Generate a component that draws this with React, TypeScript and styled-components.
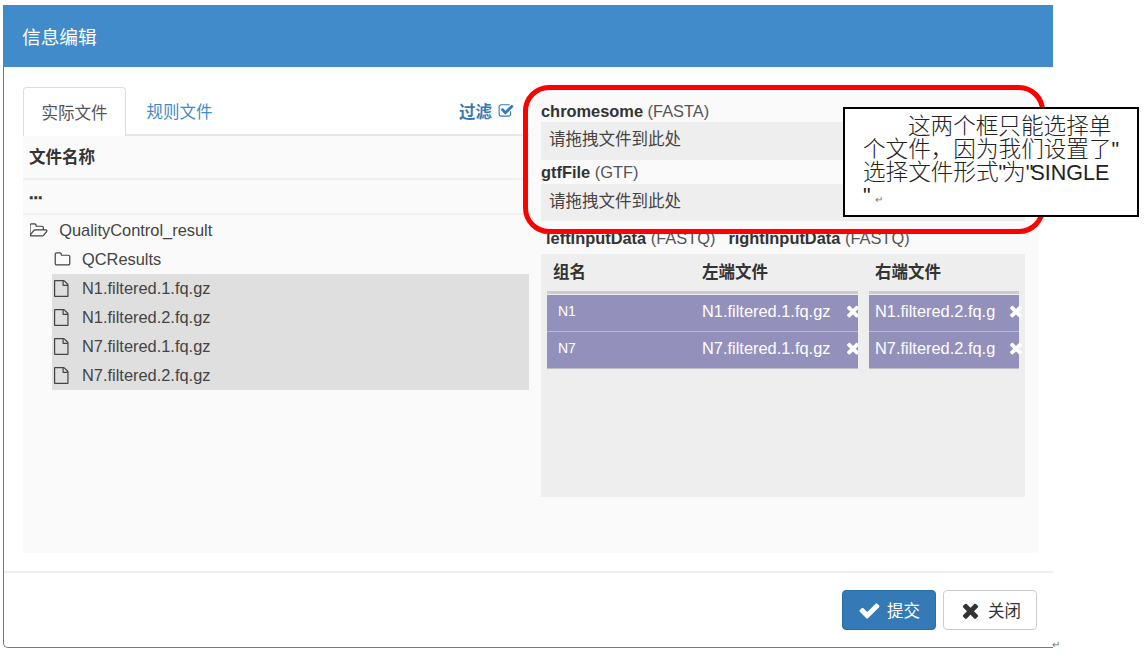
import React from 'react'
import styled, { createGlobalStyle } from 'styled-components'

const FONT = `"Liberation Sans", "Noto Sans CJK SC", sans-serif`

const GlobalStyle = createGlobalStyle`
  html, body {
    margin: 0;
    padding: 0;
    background: #fff;
    font-family: ${FONT};
    color: #333;
  }
`

// Font Awesome 4 glyphs, the package only ships the redrawn 5 set
const paths = {
  file: 'M1468 380q28 28 48 76t20 88v1152q0 40-28 68t-68 28h-1344q-40 0-68-28t-28-68v-1600q0-40 28-68t68-28h896q40 0 88 20t76 48zm-444-244v376h376q-10-29-22-41l-313-313q-12-12-41-22zm384 1528v-1024h-416q-40 0-68-28t-28-68v-416h-768v1536h1280z',
  folder: 'M1600 1312v-704q0-40-28-68t-68-28h-704q-40 0-68-28t-28-68v-64q0-40-28-68t-68-28h-320q-40 0-68 28t-28 68v960q0 40 28 68t68 28h1216q40 0 68-28t28-68zm128-704v704q0 92-66 158t-158 66h-1216q-92 0-158-66t-66-158v-960q0-92 66-158t158-66h320q92 0 158 66t66 158v32h672q92 0 158 66t66 158z',
  folderOpen: 'M1717 931q0-35-53-35h-1088q-40 0-85.5 21.5t-71.5 52.5l-294 363q-18 24-18 40 0 35 53 35h1088q40 0 86-22t71-53l294-363q18-22 18-39zm-1141-163h768v-160q0-40-28-68t-68-28h-576q-40 0-68-28t-28-68v-64q0-40-28-68t-68-28h-320q-40 0-68 28t-28 68v853l256-315q44-53 116-87.5t140-34.5zm1269 163q0 62-46 120l-295 363q-43 53-116 87.5t-140 34.5h-1088q-92 0-158-66t-66-158v-960q0-92 66-158t158-66h320q92 0 158 66t66 158v32h544q92 0 158 66t66 158v160h192q54 0 99 24.5t67 70.5q15 32 15 68z',
  times: 'M1490 1322q0 40-28 68l-136 136q-28 28-68 28t-68-28l-294-294-294 294q-28 28-68 28t-68-28l-136-136q-28-28-28-68t28-68l294-294-294-294q-28-28-28-68t28-68l136-136q28-28 68-28t68 28l294 294 294-294q28-28 68-28t68 28l136 136q28 28 28 68t-28 68l-294 294 294 294q28 28 28 68z',
  check: 'M1671 566q0 40-28 68l-724 724-136 136q-28 28-68 28t-68-28l-136-136-362-362q-28-28-28-68t28-68l136-136q28-28 68-28t68 28l294 295 656-657q28-28 68-28t68 28l136 136q28 28 28 68z',
  checkSquare: 'M1472 930v318q0 119-84.5 203.5t-203.5 84.5h-832q-119 0-203.5-84.5t-84.5-203.5v-832q0-119 84.5-203.5t203.5-84.5h832q63 0 117 25 15 7 18 23 3 17-9 29l-49 49q-10 10-23 10-3 0-9-2-23-6-45-6h-832q-66 0-113 47t-47 113v832q0 66 47 113t113 47h832q66 0 113-47t47-113v-254q0-13 9-22l64-64q10-10 23-10 6 0 12 3 20 8 20 29zm231-489l-814 814q-24 24-57 24t-57-24l-430-430q-24-24-24-57t24-57l110-110q24-24 57-24t57 24l263 263 647-647q24-24 57-24t57 24l110 110q24 24 24 57t-24 57z'
}

const IconSvg = styled.svg`
  flex: none;
  fill: currentColor;
  display: block;
`

interface IconProps {
  name: keyof typeof paths,
  size: number
}

const Icon: React.FC<IconProps> = ({ name, size }) => {
  const vbWidth = name === 'folderOpen' ? 1920 : 1792
  return (
    <IconSvg width={size * vbWidth / 1792} height={size} viewBox={`0 0 ${vbWidth} 1792`}>
      <path d={paths[name]} />
    </IconSvg>
  )
}

const Page = styled.div`
  position: relative;
  width: 1148px;
  height: 658px;
  overflow: hidden;
  padding: 5px 0 0 3px;
  box-sizing: border-box;
`

const Modal = styled.div`
  width: 1050px;
  height: 643px;
  box-sizing: border-box;
  display: flex;
  flex-direction: column;
  border-left: 1px solid #777;
  border-bottom: 1px solid #777;
  border-bottom-left-radius: 5px;
`

const Header = styled.div`
  height: 62px;
  flex: none;
  background: #428bca;
  color: #fff;
  font-size: 18.7px;
  display: flex;
  align-items: center;
  padding-left: 19px;
  margin-left: -1px;
  padding-bottom: 1px;
  box-sizing: border-box;
`

const Body = styled.div`
  height: 504px;
  flex: none;
  padding: 20px 17px 18px 19px;
  box-sizing: border-box;
  display: flex;
`

const LeftPanel = styled.div`
  width: 506px;
  flex: none;
  display: flex;
  flex-direction: column;
`

const Tabs = styled.div`
  height: 49px;
  flex: none;
  box-sizing: border-box;
  display: flex;
  align-items: stretch;
  border-bottom: 2px solid #e6e6e6;
`

const Tab = styled.div<{ $active?: boolean }>`
  width: 103px;
  box-sizing: border-box;
  height: ${(p) => (p.$active ? '49px' : '47px')};
  margin-left: ${(p) => (p.$active ? '0' : '2px')};
  display: flex;
  align-items: center;
  justify-content: center;
  font-size: 16.5px;
  color: ${(p) => (p.$active ? '#555' : '#428bca')};
  background: #fff;
  border: ${(p) => (p.$active ? '1px solid #ddd' : 'none')};
  border-bottom: none;
  border-radius: 4px 4px 0 0;
`

const FilterLink = styled.div`
  margin-left: auto;
  margin-right: 15px;
  display: flex;
  align-items: center;
  gap: 6px;
  font-size: 16.5px;
  font-weight: 700;
  color: #337ab7;
`

const TreePanel = styled.div`
  flex: 1;
  background: #fafafa;
`

const TableHead = styled.div`
  height: 44px;
  box-sizing: border-box;
  padding: 0 0 2px 6px;
  display: flex;
  align-items: center;
  font-size: 16.5px;
  font-weight: 700;
  border-bottom: 2px solid #f0f0f0;
`

const ParentRow = styled.div`
  height: 35px;
  box-sizing: border-box;
  padding: 0 0 6px 6px;
  display: flex;
  align-items: center;
  font-size: 16px;
  font-weight: 700;
  -webkit-text-stroke: 0.5px #333;
  border-bottom: 2px solid #f0f0f0;
`

const Tree = styled.div`
  padding-top: 1px;
`

const TreeRow = styled.div<{ $depth: number; $selected?: boolean }>`
  height: 29px;
  margin-left: ${(p) => (p.$depth ? '29px' : '0')};
  padding-left: ${(p) => (p.$depth ? '2px' : '7px')};
  display: flex;
  align-items: center;
  gap: 11px;
  font-size: 16.4px;
  color: #444;
  background: ${(p) => (p.$selected ? '#dfdfdf' : 'transparent')};
`

const RightPanel = styled.div`
  flex: 1;
  background: #fafafa;
  padding: 14px 13px 0 12px;
  box-sizing: border-box;
  display: flex;
  flex-direction: column;
`

const FieldLabel = styled.div`
  height: 20px;
  line-height: 20px;
  font-size: 16.4px;
  color: #555;
  white-space: nowrap;
  strong {
    color: #333;
  }
`

const DropZone = styled.div<{ $height: number; $top: number }>`
  height: ${(p) => p.$height}px;
  margin: ${(p) => p.$top}px 0 2px;
  padding: 0 0 6px 8px;
  box-sizing: border-box;
  background: #eee;
  display: flex;
  align-items: center;
  font-size: 16.5px;
  color: #444;
`

const PairLabels = styled.div`
  display: flex;
  gap: 13px;
  margin: 5px 0 6px 5px;
`

const PairTable = styled.div`
  height: 243px;
  background: #eee;
  padding: 0 6px;
`

const PairColumns = styled.div`
  display: flex;
  gap: 11px;
`

const PairColumn = styled.div<{ $width: number }>`
  width: ${(p) => p.$width}px;
  flex: none;
`

const PairHeader = styled.div`
  height: 40px;
  box-sizing: border-box;
  padding-bottom: 4px;
  display: flex;
  align-items: center;
  font-size: 16.5px;
  font-weight: 700;
  border-bottom: 3px solid #ccc;
  margin-bottom: 1px;
`

const HeaderCell = styled.div<{ $width: number; $indent: number }>`
  width: ${(p) => p.$width}px;
  padding-left: ${(p) => p.$indent}px;
  box-sizing: border-box;
`

const PairRow = styled.div<{ $clip?: boolean }>`
  height: 37px;
  box-sizing: border-box;
  padding-bottom: 4px;
  background: #9490bc;
  border-bottom: 1px solid #bcbcc4;
  color: #fff;
  display: flex;
  align-items: center;
  font-size: 16.4px;
  overflow: ${(p) => (p.$clip ? 'hidden' : 'visible')};
`

const GroupCell = styled.div`
  width: 155px;
  flex: none;
  padding-left: 11px;
  box-sizing: border-box;
  font-size: 14px;
`

const FileCell = styled.div<{ $width: number; $indent: number }>`
  width: ${(p) => p.$width}px;
  margin-left: ${(p) => p.$indent}px;
  flex: none;
  overflow: hidden;
  white-space: nowrap;
`

const RemoveSlot = styled.div`
  flex: none;
  margin-left: -3px;
  color: #fff;
`

const Footer = styled.div`
  flex: 1;
  box-sizing: border-box;
  border-top: 2px solid #eee;
  padding: 17px 16px 0 0;
  display: flex;
  justify-content: flex-end;
  align-items: flex-start;
  gap: 7px;
`

const Button = styled.div<{ $primary?: boolean }>`
  width: 94px;
  height: 40px;
  box-sizing: border-box;
  border-radius: 4px;
  border: 1px solid ${(p) => (p.$primary ? '#2e6da4' : '#ccc')};
  background: ${(p) => (p.$primary ? '#337ab7' : '#fff')};
  color: ${(p) => (p.$primary ? '#fff' : '#333')};
  display: flex;
  align-items: center;
  justify-content: center;
  gap: 6px;
  font-size: 16.5px;
`

const Highlight = styled.div`
  position: absolute;
  left: 523px;
  top: 85px;
  width: 522px;
  height: 149px;
  box-sizing: border-box;
  border: 5px solid #f00;
  border-radius: 26px;
`

const Callout = styled.div`
  position: absolute;
  left: 843px;
  top: 107px;
  width: 296px;
  height: 110px;
  box-sizing: border-box;
  border: 2px solid #000;
  background: #fff;
  color: #222;
  padding: 6px 0 0 18px;
  font-size: 22.6px;
  line-height: 23px;
  font-weight: 300;
`

const CalloutLine = styled.div<{ $indent?: number }>`
  height: 23px;
  white-space: nowrap;
  padding-left: ${(p) => p.$indent || 0}px;
`

const CalloutLatin = styled.span`
  font-size: 21.5px;
`

const CalloutQuote = styled(CalloutLatin)`
  letter-spacing: -3px;
`

const ReturnMark = styled.span`
  font-size: 10px;
  line-height: 10px;
  color: #777;
  padding-left: 4px;
`

const PageReturnMark = styled(ReturnMark)`
  position: absolute;
  left: 1048px;
  top: 640px;
`

const files = ['N1.filtered.1.fq.gz', 'N1.filtered.2.fq.gz', 'N7.filtered.1.fq.gz', 'N7.filtered.2.fq.gz']
const pairs = [
  { group: 'N1', left: 'N1.filtered.1.fq.gz', right: 'N1.filtered.2.fq.g' },
  { group: 'N7', left: 'N7.filtered.1.fq.gz', right: 'N7.filtered.2.fq.g' }
]

const App: React.FC = () => (
  <Page>
    <GlobalStyle />
    <Modal>
      <Header>信息编辑</Header>
      <Body>
        <LeftPanel>
          <Tabs>
            <Tab $active>实际文件</Tab>
            <Tab>规则文件</Tab>
            <FilterLink>过滤 <Icon name='checkSquare' size={16} /></FilterLink>
          </Tabs>
          <TreePanel>
            <TableHead>文件名称</TableHead>
            <ParentRow>...</ParentRow>
            <Tree>
              <TreeRow $depth={0}><Icon name='folderOpen' size={17} />QualityControl_result</TreeRow>
              <TreeRow $depth={1}><Icon name='folder' size={17} />QCResults</TreeRow>
              {files.map((file) => (
                <TreeRow key={file} $depth={1} $selected><Icon name='file' size={17} />{file}</TreeRow>
              ))}
            </Tree>
          </TreePanel>
        </LeftPanel>
        <RightPanel>
          <FieldLabel><strong>chromesome</strong> (FASTA)</FieldLabel>
          <DropZone $height={38} $top={1}>请拖拽文件到此处</DropZone>
          <FieldLabel><strong>gtfFile</strong> (GTF)</FieldLabel>
          <DropZone $height={37} $top={2}>请拖拽文件到此处</DropZone>
          <PairLabels>
            <FieldLabel><strong>leftInputData</strong> (FASTQ)</FieldLabel>
            <FieldLabel><strong>rightInputData</strong> (FASTQ)</FieldLabel>
          </PairLabels>
          <PairTable>
            <PairColumns>
              <PairColumn $width={311}>
                <PairHeader>
                  <HeaderCell $width={155} $indent={6}>组名</HeaderCell>
                  <HeaderCell $width={156} $indent={0}>左端文件</HeaderCell>
                </PairHeader>
                {pairs.map((pair) => (
                  <PairRow key={pair.group} $clip>
                    <GroupCell>{pair.group}</GroupCell>
                    <FileCell $width={145} $indent={0}>{pair.left}</FileCell>
                    <RemoveSlot><Icon name='times' size={18} /></RemoveSlot>
                  </PairRow>
                ))}
              </PairColumn>
              <PairColumn $width={150}>
                <PairHeader>
                  <HeaderCell $width={150} $indent={6}>右端文件</HeaderCell>
                </PairHeader>
                {pairs.map((pair) => (
                  <PairRow key={pair.group}>
                    <FileCell $width={135} $indent={6}>{pair.right}</FileCell>
                    <RemoveSlot><Icon name='times' size={18} /></RemoveSlot>
                  </PairRow>
                ))}
              </PairColumn>
            </PairColumns>
          </PairTable>
        </RightPanel>
      </Body>
      <Footer>
        <Button $primary><Icon name='check' size={23} />提交</Button>
        <Button><Icon name='times' size={23} />关闭</Button>
      </Footer>
    </Modal>
    <Highlight />
    <Callout>
      <CalloutLine $indent={45}>这两个框只能选择单</CalloutLine>
      <CalloutLine>个文件，因为我们设置了<CalloutLatin>"</CalloutLatin></CalloutLine>
      <CalloutLine>选择文件形式<CalloutQuote>"</CalloutQuote>为<CalloutQuote>"</CalloutQuote><CalloutLatin>SINGLE</CalloutLatin></CalloutLine>
      <CalloutLine><CalloutLatin>"</CalloutLatin><ReturnMark>↵</ReturnMark></CalloutLine>
    </Callout>
    <PageReturnMark>↵</PageReturnMark>
  </Page>
)

export default App
